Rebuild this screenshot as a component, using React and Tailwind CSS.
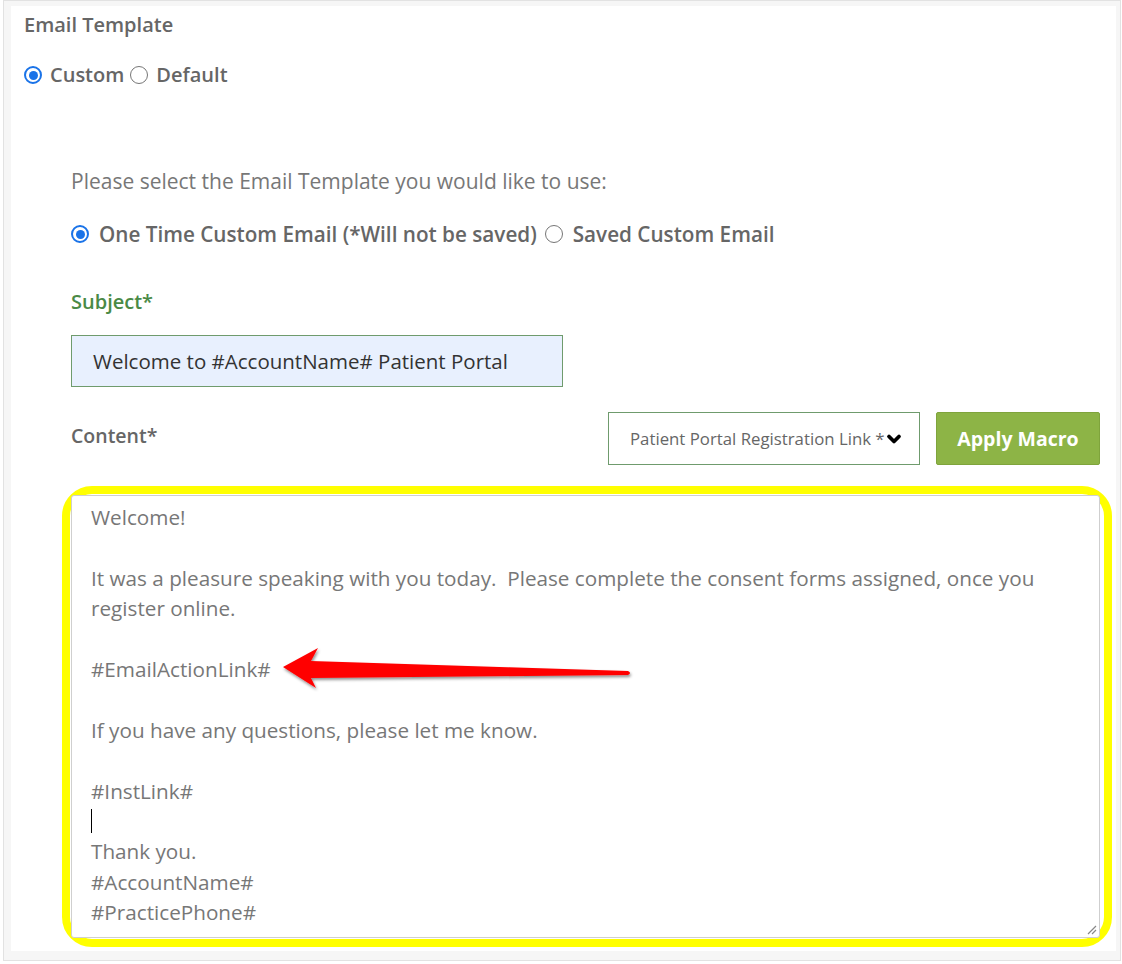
import { ChevronDown } from "lucide-react";

const font = { fontFamily: '"Open Sans", "Liberation Sans", sans-serif' };

function Radio({ checked }) {
  return (
    <span
      className={
        "inline-flex items-center justify-center w-[18px] h-[18px] rounded-full border shrink-0 " +
        (checked ? "border-[#1a73e8] border-2" : "border-[#767676] border")
      }
    >
      {checked && <span className="w-[9px] h-[9px] rounded-full bg-[#1a73e8]" />}
    </span>
  );
}

function Arrow() {
  return (
    <svg
      className="absolute left-[270px] top-[642px]"
      width="380"
      height="60"
      viewBox="0 0 380 60"
    >
      <defs>
        <filter id="sh" x="-10%" y="-30%" width="120%" height="160%">
          <feDropShadow dx="1" dy="2" stdDeviation="1.5" floodColor="#000" floodOpacity="0.45" />
        </filter>
      </defs>
      <path
        d="M13 25 L48 6 L41 19 L358 29 Q362 31 358 33 L41 36 L46 46 Z"
        fill="#ff0000"
        filter="url(#sh)"
      />
    </svg>
  );
}

export default function App() {
  const body = [
    "Welcome!",
    "",
    "It was a pleasure speaking with you today.\u00a0 Please complete the consent forms assigned, once you",
    "register online.",
    "",
    "#EmailActionLink#",
    "",
    "If you have any questions, please let me know.",
    "",
    "#InstLink#",
    "CURSOR",
    "Thank you.",
    "#AccountName#",
    "#PracticePhone#",
  ];

  return (
    <div className="relative w-[1122px] h-[964px] bg-white overflow-hidden" style={font}>
      <div className="ml-[3px] w-[1118px] h-[961px] border border-[#e2e2e2] bg-[#f6f6f6] pl-[7px] pr-[4px] pt-[5px] pb-[9px]">
        <div className="h-full bg-white pl-[13px] pt-[8px]">
          <div className="text-[20px] font-semibold text-[#666] leading-[22px]">Email Template</div>
          <div className="mt-[28px] flex items-center text-[20px] font-semibold text-[#666] leading-[22px]">
            <Radio checked />
            <span className="ml-[8px] mr-[6px]">Custom</span>
            <Radio />
            <span className="ml-[8px]">Default</span>
          </div>

          <div className="pl-[47px] pr-[15px]">
            <div className="mt-[84px] text-[21px] text-[#777] leading-[22px]">
              Please select the Email Template you would like to use:
            </div>
            <div className="mt-[31px] flex items-center text-[20.7px] font-semibold text-[#666] leading-[22px]">
              <Radio checked />
              <span className="ml-[10px] mr-[8px]">One Time Custom Email (*Will not be saved)</span>
              <Radio />
              <span className="ml-[10px]">Saved Custom Email</span>
            </div>

            <div className="mt-[46px] text-[20px] font-semibold text-[#4a8a46] leading-[22px]">Subject*</div>
            <div className="mt-[22px] w-[492px] h-[52px] border border-[#6f9b6d] bg-[#e8f0fe] flex items-center pl-[21px] text-[20.5px] text-[#333]">
              Welcome to #AccountName# Patient Portal
            </div>

            <div className="mt-[25px] flex items-start">
              <div className="pt-[13px] text-[19.5px] font-semibold text-[#666] leading-[22px]">Content*</div>
              <div className="ml-auto flex gap-[16px] pr-[1px]">
                <div className="w-[312px] h-[53px] border border-[#6f9b6d] bg-white flex items-center pl-[21px] pr-[12px]">
                  <span className="text-[16.8px] text-[#666] whitespace-nowrap overflow-hidden w-[256px]">
                    Patient Portal Registration Link *
                  </span>
                  <ChevronDown className="w-[20px] h-[20px] text-black -ml-[2px]" strokeWidth={4.5} />
                </div>
                <div className="w-[164px] h-[53px] rounded-[2px] bg-[#8db446] border border-[#7fa43c] flex items-center justify-center text-white font-bold text-[19.5px]">
                  Apply Macro
                </div>
              </div>
            </div>

            <div className="mt-[21px] -ml-[9px] w-[1050px] h-[461px] border-[8px] border-[#ffff00] rounded-[30px] p-[1px] pl-[1px] pr-[4px]">
              <div className="relative h-full border border-[#cfcfcf] rounded-[3px] bg-white pl-[19px] pt-[6px] text-[20.7px] text-[#777] leading-[30.4px]">
                {body.map((l, i) =>
                  l === "CURSOR" ? (
                    <div key={i} className="h-[30.4px] flex items-center">
                      <span className="w-[1px] h-[24px] bg-black" />
                    </div>
                  ) : (
                    <div key={i} className="h-[30.4px] whitespace-nowrap">
                      {l || "\u00a0"}
                    </div>
                  )
                )}
                <svg className="absolute right-[2px] bottom-[2px]" width="12" height="12" viewBox="0 0 12 12">
                  <path d="M11 3 L3 11 M11 7 L7 11" stroke="#888" strokeWidth="1.2" />
                </svg>
              </div>
            </div>
          </div>
        </div>
      </div>
      <Arrow />
    </div>
  );
}
